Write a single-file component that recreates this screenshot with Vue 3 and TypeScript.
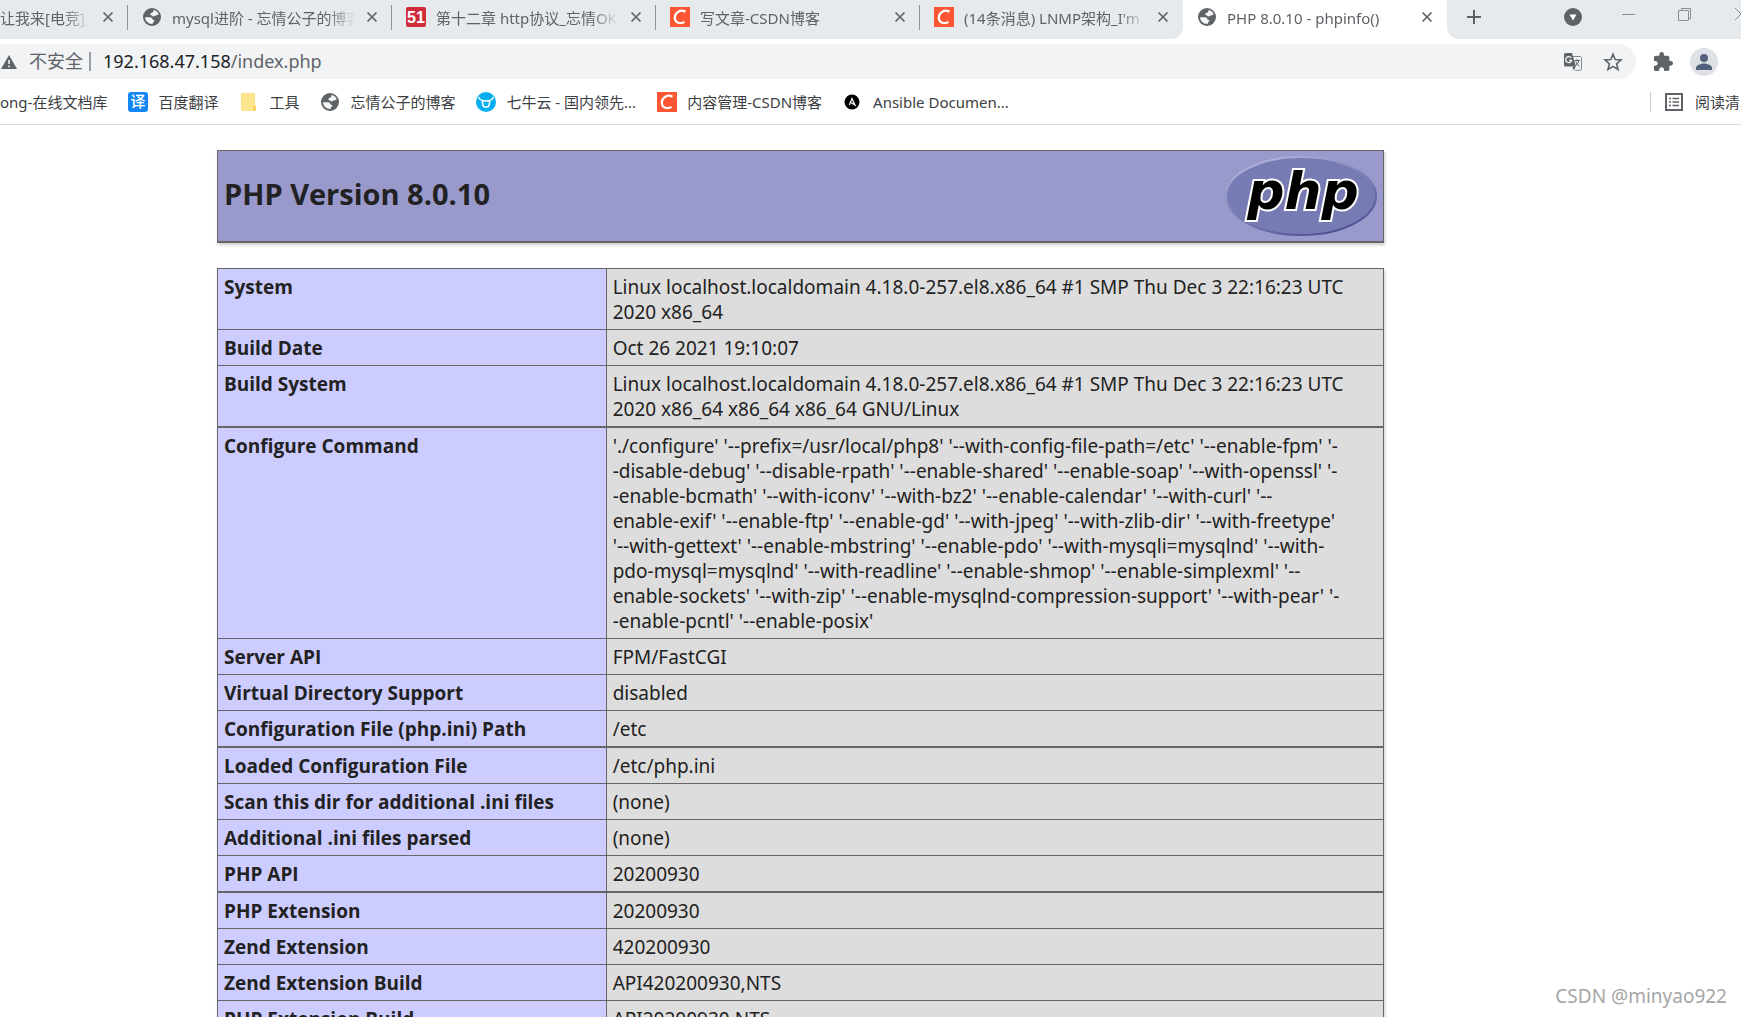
<script setup lang="ts">
interface Tab { title: string; icon: string; active?: boolean; partial?: boolean }
interface Bookmark { label: string; icon: string }
interface Row { name: string; lines: string[]; thick?: boolean }

const tabs: Tab[] = [
  { title: '让我来[电竞]_', icon: '', partial: true },
  { title: 'mysql进阶 - 忘情公子的博客', icon: 'globe' },
  { title: '第十二章 http协议_忘情OK', icon: 'fiftyone' },
  { title: '写文章-CSDN博客', icon: 'csdn' },
  { title: "(14条消息) LNMP架构_I'm", icon: 'csdn' },
  { title: 'PHP 8.0.10 - phpinfo()', icon: 'globe', active: true },
]

const bookmarks: Bookmark[] = [
  { label: 'ong-在线文档库', icon: '' },
  { label: '百度翻译', icon: 'fanyi' },
  { label: '工具', icon: 'folder' },
  { label: '忘情公子的博客', icon: 'globe' },
  { label: '七牛云 - 国内领先...', icon: 'qiniu' },
  { label: '内容管理-CSDN博客', icon: 'csdn' },
  { label: 'Ansible Documen...', icon: 'ansible' },
]

const rows: Row[] = [
  { name: 'System', lines: ['Linux localhost.localdomain 4.18.0-257.el8.x86_64 #1 SMP Thu Dec 3 22:16:23 UTC', '2020 x86_64'] },
  { name: 'Build Date', lines: ['Oct 26 2021 19:10:07'] },
  { name: 'Build System', lines: ['Linux localhost.localdomain 4.18.0-257.el8.x86_64 #1 SMP Thu Dec 3 22:16:23 UTC', '2020 x86_64 x86_64 x86_64 GNU/Linux'], thick: true },
  {
    name: 'Configure Command',
    lines: [
      "'./configure' '--prefix=/usr/local/php8' '--with-config-file-path=/etc' '--enable-fpm' '-",
      "-disable-debug' '--disable-rpath' '--enable-shared' '--enable-soap' '--with-openssl' '-",
      "-enable-bcmath' '--with-iconv' '--with-bz2' '--enable-calendar' '--with-curl' '--",
      "enable-exif' '--enable-ftp' '--enable-gd' '--with-jpeg' '--with-zlib-dir' '--with-freetype'",
      "'--with-gettext' '--enable-mbstring' '--enable-pdo' '--with-mysqli=mysqlnd' '--with-",
      "pdo-mysql=mysqlnd' '--with-readline' '--enable-shmop' '--enable-simplexml' '--",
      "enable-sockets' '--with-zip' '--enable-mysqlnd-compression-support' '--with-pear' '-",
      "-enable-pcntl' '--enable-posix'",
    ],
  },
  { name: 'Server API', lines: ['FPM/FastCGI'] },
  { name: 'Virtual Directory Support', lines: ['disabled'] },
  { name: 'Configuration File (php.ini) Path', lines: ['/etc'], thick: true },
  { name: 'Loaded Configuration File', lines: ['/etc/php.ini'] },
  { name: 'Scan this dir for additional .ini files', lines: ['(none)'] },
  { name: 'Additional .ini files parsed', lines: ['(none)'] },
  { name: 'PHP API', lines: ['20200930'], thick: true },
  { name: 'PHP Extension', lines: ['20200930'] },
  { name: 'Zend Extension', lines: ['420200930'] },
  { name: 'Zend Extension Build', lines: ['API420200930,NTS'] },
  { name: 'PHP Extension Build', lines: ['API20200930,NTS'] },
]
</script>

<template>
  <svg class="sprite" aria-hidden="true">
    <symbol id="globe" viewBox="0 0 20 20">
      <circle cx="10" cy="10" r="9" fill="#5f6368" />
      <path d="M11.500 3.100C14 3.500 16 5.200 16.700 7.500c-1.200.2-1.700 1-2.900.9-1.100-.1-1.300.9-2.300 1-1.200.1-1.200-1.300-2.300-1.200C8 8.300 8 6.300 9.300 6.100c1.200-.1 2.400-1.500 2.200-3z" fill="#f4f6f7" />
      <path d="M3.100 10.300H8c1.800 0 2.300 1 2.400 2.100 1.600 0 2 .8 1.900 1.600-.1.900-1.400.9-1.500 1.700l-.1 1.300C6.500 17.200 3.100 14.300 3.100 10.300z" fill="#f4f6f7" />
    </symbol>
    <symbol id="fiftyone" viewBox="0 0 20 20">
      <rect width="20" height="20" rx="2" fill="#cf2c3b" />
      <text x="10" y="16" text-anchor="middle" font-family="'Liberation Sans', sans-serif" font-weight="700" font-size="16" fill="#fff">51</text>
    </symbol>
    <symbol id="csdn" viewBox="0 0 20 20">
      <rect width="20" height="20" fill="#fc5531" />
      <path d="M15.500 4.800C11 2.300 5.300 4.500 4.800 10.300c-.4 5.100 4.900 7 9.700 4.800" fill="none" stroke="#fff" stroke-width="2.200" />
    </symbol>
    <symbol id="fanyi" viewBox="0 0 20 20">
      <rect width="20" height="20" rx="3" fill="#1487f5" />
      <text x="10" y="15" text-anchor="middle" font-family="'Noto Sans CJK SC', sans-serif" font-weight="500" font-size="15" fill="#fff">译</text>
    </symbol>
    <symbol id="folder" viewBox="0 0 20 20">
      <path d="M3 1h12q1 0 1 1v11.500l1 .5v4q0 1-1 1H3q-1 0-1-1V2q0-1 1-1z" fill="#ffe48e" />
      <path d="M14 18v-3.500q0-1 2-1.500l1 1v4q0 1-1 1h-1q-1 0-1-1z" fill="#fcd568" />
    </symbol>
    <symbol id="qiniu" viewBox="0 0 20 20">
      <circle cx="10" cy="10" r="10" fill="#06aeef" />
      <path d="M2.500 5c1 3 4 4 7.500 4s6.500-1 7.500-4" fill="none" stroke="#fff" stroke-width="1.300" />
      <path d="M6.200 9l.8 4.500q.3 1.500 1.800 1.500h2.400q1.500 0 1.800-1.500l.8-4.500" fill="none" stroke="#fff" stroke-width="1.500" />
    </symbol>
    <symbol id="ansible" viewBox="0 0 20 20">
      <circle cx="9" cy="10" r="7.500" fill="#000" />
      <path d="M6.300 13L9 6.500 12 13.200 7.700 10.300" fill="none" stroke="#fff" stroke-width="1.200" />
    </symbol>
    <symbol id="cross" viewBox="0 0 12 12">
      <path d="M1.500 1.500l9 9m0-9l-9 9" stroke="#5f6368" stroke-width="1.700" />
    </symbol>
  </svg>

  <div class="browser">
    <header>
      <nav class="tabstrip" aria-label="Tabs">
        <div v-for="(tab, i) in tabs" :key="i" class="tab" :class="{ active: tab.active, partial: tab.partial, last: i === 4 }">
          <svg v-if="tab.icon" class="icon"><use :href="'#' + tab.icon" /></svg>
          <span class="tab-title">{{ tab.title }}</span>
          <button class="close" type="button" aria-label="Close tab"><svg width="12" height="12"><use href="#cross" /></svg></button>
        </div>
        <div class="strip-end">
          <button type="button" class="plus" aria-label="New tab">
            <svg width="16" height="16" viewBox="0 0 16 16"><path d="M8 1v14M1 8h14" stroke="#5f6368" stroke-width="2" /></svg>
          </button>
          <div class="window-controls">
            <button type="button" class="search" aria-label="Search tabs">
              <svg width="18" height="18" viewBox="0 0 18 18"><circle cx="9" cy="9" r="9" fill="#5f6368" /><path d="M5.500 6.500h7L9 12.500z" fill="#fff" /></svg>
            </button>
            <button type="button" aria-label="Minimize"><svg width="14" height="14"><path d="M0 7.500h13" stroke="#8c8f92" /></svg></button>
            <button type="button" aria-label="Restore"><svg width="14" height="14" fill="none" stroke="#8c8f92"><path d="M.5 3.500h10v10H.5zM3.500 3V1.500h9v10H11" /></svg></button>
            <button type="button" aria-label="Close window"><svg width="14" height="14"><path d="M1 1l12 12m0-12L1 13" stroke="#8c8f92" /></svg></button>
          </div>
        </div>
      </nav>

      <div class="toolbar">
        <div class="omnibox">
          <svg class="warn" width="16" height="14" viewBox="0 0 16 14"><path d="M8 0l8 14H0z" fill="#5f6368" /><path d="M8 5v4m0 1.500v1.700" stroke="#f1f3f4" stroke-width="1.600" /></svg>
          <span class="insecure">不安全</span>
          <span class="bar"></span>
          <div class="url"><span class="host">192.168.47.158</span>/index.php</div>
          <button type="button" aria-label="Translate">
            <svg width="20" height="20" viewBox="0 0 20 20">
              <path d="M10 4.500h7.500q1 0 1 1v11.800q0 1-1 1H12" fill="none" stroke="#85898d" />
              <path d="M2.500 1H9l4 13.500H2.500q-1.500 0-1.500-1.500V2.500Q1 1 2.500 1z" fill="#5f6368" />
              <path d="M9.500 14.500H13l-2.500 4z" fill="#5f6368" />
              <path d="M8.200 6A3 3 0 1 0 8.600 8.300H6" fill="none" stroke="#fff" stroke-width="1.300" />
              <path d="M11.500 8.500H17M14 7v1.500M16 8.500q-1 3-3 5M12.800 9.500q1.200 3 3.700 5" fill="none" stroke="#5f6368" />
            </svg>
          </button>
          <button type="button" aria-label="Bookmark this page">
            <svg width="20" height="20" viewBox="0 0 20 20"><path d="M10 2.200l2.200 5.400 5.800.4-4.400 3.800 1.400 5.700-5-3.100-5 3.100 1.400-5.700L2 8l5.800-.4z" fill="none" stroke="#5f6368" stroke-width="1.600" /></svg>
          </button>
        </div>
        <button type="button" class="extensions" aria-label="Extensions">
          <svg width="20" height="20" viewBox="1 1 22 22"><path fill="#5f6368" d="M20.500 11H19V7c0-1.100-.9-2-2-2h-4V3.500a2.500 2.500 0 0 0-5 0V5H4c-1.100 0-1.990.9-1.990 2v3.800H3.500c1.490 0 2.700 1.210 2.700 2.700s-1.210 2.700-2.700 2.700H2V20c0 1.100.9 2 2 2h3.800v-1.500c0-1.490 1.210-2.700 2.700-2.700s2.700 1.210 2.700 2.700V22H17c1.100 0 2-.9 2-2v-4h1.500a2.500 2.500 0 0 0 0-5z" /></svg>
        </button>
        <button type="button" class="profile" aria-label="Profile">
          <svg width="28" height="28" viewBox="0 0 28 28"><circle cx="14" cy="14" r="14" fill="#dee1e6" /><circle cx="14" cy="10" r="4" fill="#53627c" /><path d="M6 22v-2c0-3 5-4.500 8-4.500s8 1.500 8 4.500v2z" fill="#53627c" /></svg>
        </button>
      </div>

      <nav class="bookmarks" aria-label="Bookmarks">
        <a v-for="b in bookmarks" :key="b.label" class="bookmark" href="#">
          <svg v-if="b.icon" class="icon"><use :href="'#' + b.icon" /></svg>
          <span>{{ b.label }}</span>
        </a>
        <button type="button" class="reading">
          <svg width="18" height="18" viewBox="0 0 18 18" fill="none" stroke="#5f6368"><path stroke-width="2" d="M1 1h16v16H1z" /><path stroke-width="1.500" d="M4 5.500h2M7.500 5.500H14M4 9h2M7.500 9H14M4 12.500h2M7.500 12.500H14" /></svg>
          <span>阅读清单</span>
        </button>
      </nav>
    </header>

    <main>
      <section class="banner">
        <h1>PHP Version 8.0.10</h1>
        <svg class="logo" width="152" height="80" viewBox="0 0 152 80" role="img" aria-label="PHP logo">
          <defs>
            <linearGradient id="rim" x1="0.2" y1="0" x2="0.8" y2="1">
              <stop offset="0" stop-color="#b4b5dc" />
              <stop offset="0.450" stop-color="#8386bd" />
              <stop offset="1" stop-color="#484a8f" />
            </linearGradient>
          </defs>
          <ellipse cx="76" cy="40" rx="75" ry="39" fill="#777bb3" stroke="url(#rim)" stroke-width="2" />
          <text x="78" y="53" text-anchor="middle" class="logo-text">php</text>
        </svg>
      </section>

      <table>
        <tbody>
          <tr v-for="row in rows" :key="row.name" :class="{ thick: row.thick }">
            <th scope="row">{{ row.name }}</th>
            <td><template v-for="(line, i) in row.lines" :key="i"><br v-if="i > 0">{{ line }}</template></td>
          </tr>
        </tbody>
      </table>
    </main>
    <div class="watermark">CSDN @minyao922</div>
  </div>
</template>

<style>
body { background: #fff; }
</style>

<style scoped>
.browser {
  position: relative;
  display: flex;
  flex-direction: column;
  height: 100vh;
  overflow: hidden;
  font-family: "Noto Sans", "Noto Sans CJK SC", sans-serif;
  color: #222;
}
button {
  display: flex;
  align-items: center;
  justify-content: center;
  padding: 0;
  border: 0;
  background: none;
  font: inherit;
  color: inherit;
}
header { flex: none; }
svg { display: block; flex: none; }
svg.sprite { display: none; }
.icon { width: 20px; height: 20px; }

.tabstrip { display: flex; height: 39px; overflow: hidden; font-size: 15px; color: #5f6368; background: #fff; }
.tab {
  display: flex;
  flex: 0 0 264px;
  box-sizing: border-box;
  align-items: center;
  gap: 10px;
  min-width: 0;
  height: 39px;
  padding: 0 13px 5px 14px;
  background: #e6eaed;
}
.tab:not(.active):not(.last) {
  background: linear-gradient(#909498, #909498) right 5px / 1px 25px no-repeat #e6eaed;
}
.tab-title {
  flex: 1;
  min-width: 0;
  padding-top: 2px;
  overflow: hidden;
  white-space: nowrap;
  line-height: 24px;
  -webkit-mask-image: linear-gradient(to right, #000 calc(100% - 28px), transparent);
  mask-image: linear-gradient(to right, #000 calc(100% - 28px), transparent);
}
.partial { flex-basis: 128px; padding-left: 0; }
.last { border-bottom-right-radius: 12px; flex-basis: 263px; }
.active { background: #fff; flex-basis: 264px; }
.close { width: 14px; height: 20px; }
.strip-end {
  display: flex;
  flex: 1;
  min-width: 0;
  align-items: center;
  padding: 0 0 5px 19px;
  border-bottom-left-radius: 12px;
  background: #e6eaed;
}
.window-controls { display: flex; align-items: center; margin: 0 -28px 0 auto; }
.window-controls button { width: 56px; height: 26px; padding-bottom: 6px; box-sizing: border-box; }
.window-controls .search { width: 18px; padding: 0; margin-right: 19px; }

.toolbar { display: flex; align-items: center; padding: 5px 23px 0 0; }
.omnibox {
  display: flex;
  flex: 1;
  align-items: center;
  height: 35px;
  padding-right: 13px;
  border-radius: 0 18px 18px 0;
  background: #f1f3f4;
  font-size: 18px;
  color: #5f6368;
}
.warn { margin: 0 12px 0 1px; }
.insecure, .url { padding-bottom: 2px; line-height: 24px; }
.bar { width: 2px; height: 19px; margin: 0 12px 0 6px; background: #9a9da1; }
.url { flex: 1; }
.host { color: #202124; }
.omnibox button { width: 20px; margin-left: 20px; }
.extensions { margin: 0 17px; }

.bookmarks {
  display: flex;
  align-items: center;
  gap: 21px;
  height: 45px;
  border-bottom: 1px solid #dadce0;
  font-size: 15px;
  overflow: hidden;
  white-space: nowrap;
  color: #3c4043;
}
.bookmark { display: flex; align-items: center; gap: 10px; color: inherit; text-decoration: none; }
.bookmarks .reading { gap: 12px; height: 20px; margin: 0 -14px 0 auto; padding-left: 14px; border-left: 1px solid #c8cbcf; }

main { flex: 1; min-height: 0; padding: 25px 357px 0 217px; overflow: hidden; }
.banner {
  display: flex;
  align-items: center;
  justify-content: space-between;
  padding: 5px 6px;
  border: 1px solid #666;
  border-bottom-width: 2px;
  background: #99c;
  box-shadow: 1px 2px 3px #ccc;
}
h1 { margin: 0; padding-bottom: 4px; font-family: "Open Sans", sans-serif; font-size: 29px; font-weight: 700; line-height: 40px; }
.logo-text {
  font: italic 700 52px "DejaVu Sans", sans-serif;
  fill: #000;
  stroke: #fff;
  stroke-width: 4px;
  paint-order: stroke;
}
table {
  width: 100%;
  margin-top: 25px;
  table-layout: fixed;
  border-collapse: separate;
  border-spacing: 0;
  border: solid #666;
  border-width: 1px 0 0 1px;
  box-shadow: 1px 2px 3px #ccc;
  font-size: 19px;
  line-height: 25px;
}
th, td { padding: 6px 6px 4px; border: solid #666; border-width: 0 1px 1px 0; text-align: left; vertical-align: top; }
th { box-sizing: border-box; width: 33.333%; background: #ccf; font-family: "Open Sans", sans-serif; font-weight: 700; }
td { background: #ddd; white-space: nowrap; }
.thick th, .thick td { border-bottom-width: 2px; }
.watermark {
  position: absolute;
  right: 14px;
  bottom: 8px;
  font-size: 19px;
  line-height: 26px;
  color: #a6a6a6;
}
</style>
